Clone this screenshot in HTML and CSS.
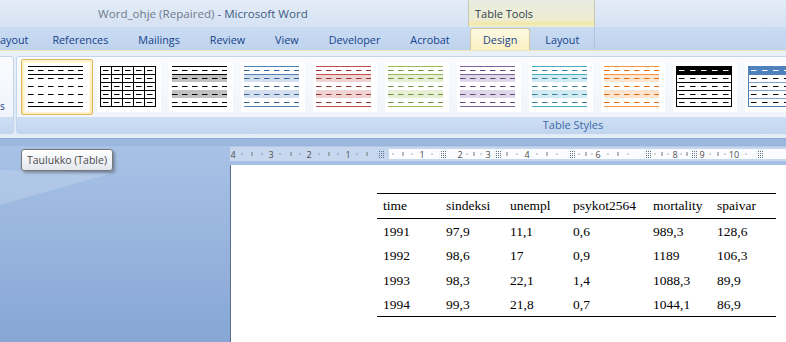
FILE: index.html
```html
<!DOCTYPE html>
<html>
<head>
    <meta charset="UTF-8">
    <title>Word_ohje (Repaired) - Microsoft Word</title>
    <link rel="stylesheet" href="styles.css">
</head>
<body>
    <!-- shared dash patterns for the table style previews -->
    <svg class="defs" width="0" height="0">
        <defs>
            <pattern id="dash6" width="10" height="8" patternUnits="userSpaceOnUse">
                <rect y="4" width="5.5" height="1" fill="#fff"/>
            </pattern>
            <pattern id="dash5" width="11" height="8" patternUnits="userSpaceOnUse">
                <rect x="3" y="4" width="5.5" height="1" fill="#fff"/>
            </pattern>
            <mask id="m6" maskUnits="userSpaceOnUse" x="0" y="0" width="56" height="43">
                <rect width="56" height="43" fill="url(#dash6)"/>
            </mask>
            <mask id="m5" maskUnits="userSpaceOnUse" x="0" y="0" width="56" height="43">
                <rect width="56" height="43" fill="url(#dash5)"/>
            </mask>
        </defs>
    </svg>

    <div class="titlebar">
        <div class="title">Word_ohje (Repaired) <span class="app">- Microsoft Word</span></div>
        <div class="ctx-head">Table Tools</div>
    </div>

    <div class="tabrow">
        <div class="tabs">
            <span class="tab cut">ayout</span>
            <span class="tab">References</span>
            <span class="tab">Mailings</span>
            <span class="tab">Review</span>
            <span class="tab">View</span>
            <span class="tab">Developer</span>
            <span class="tab">Acrobat</span>
        </div>
        <div class="ctx-tabs">
            <span class="tab active">Design</span>
            <span class="tab">Layout</span>
        </div>
    </div>

    <div class="ribbon">
        <div class="group prev">
            <div class="prev-body"><span class="prev-text">s</span></div>
            <div class="group-label"></div>
        </div>
        <div class="group styles">
            <div class="gallery">
                <!-- plain -->
                <div class="item selected"><div class="tile"><svg width="56" height="43">
                    <rect width="55" height="1"/><rect y="8" width="55" height="1"/><rect y="40" width="55" height="1"/>
                    <rect width="55" height="41" mask="url(#m6)"/>
                </svg></div></div>
                <!-- grid -->
                <div class="item"><div class="tile"><svg width="56" height="43">
                    <path d="M.5 .5H55.5V40.5H.5Z M11.5 .5V40.5 M22.5 .5V40.5 M33.5 .5V40.5 M44.5 .5V40.5 M.5 8.5H55.5 M.5 16.5H55.5 M.5 24.5H55.5 M.5 32.5H55.5" fill="none" stroke="#000"/>
                    <rect width="55" height="41" mask="url(#m5)"/>
                </svg></div></div>
                <!-- light shading, black and accents 1-6 -->
                <div class="item"><div class="tile"><svg width="56" height="43">
                    <rect y="9" width="55" height="7" fill="#c0c0c0"/><rect y="24" width="55" height="8" fill="#c0c0c0"/>
                    <rect width="55" height="1"/><rect y="8" width="55" height="1"/><rect y="40" width="55" height="1"/>
                    <rect width="55" height="41" mask="url(#m6)"/>
                </svg></div></div>
                <div class="item"><div class="tile"><svg width="56" height="43">
                    <rect y="9" width="55" height="7" fill="#d3dfee"/><rect y="24" width="55" height="8" fill="#d3dfee"/>
                    <g fill="#4f81bd"><rect width="55" height="1"/><rect y="8" width="55" height="1"/><rect y="40" width="55" height="1"/></g>
                    <rect width="55" height="41" fill="#365f91" mask="url(#m6)"/>
                </svg></div></div>
                <div class="item"><div class="tile"><svg width="56" height="43">
                    <rect y="9" width="55" height="7" fill="#efd3d2"/><rect y="24" width="55" height="8" fill="#efd3d2"/>
                    <g fill="#c0504d"><rect width="55" height="1"/><rect y="8" width="55" height="1"/><rect y="40" width="55" height="1"/></g>
                    <rect width="55" height="41" fill="#943634" mask="url(#m6)"/>
                </svg></div></div>
                <div class="item"><div class="tile"><svg width="56" height="43">
                    <rect y="9" width="55" height="7" fill="#e6eed5"/><rect y="24" width="55" height="8" fill="#e6eed5"/>
                    <g fill="#9bbb59"><rect width="55" height="1"/><rect y="8" width="55" height="1"/><rect y="40" width="55" height="1"/></g>
                    <rect width="55" height="41" fill="#76923c" mask="url(#m6)"/>
                </svg></div></div>
                <div class="item"><div class="tile"><svg width="56" height="43">
                    <rect y="9" width="55" height="7" fill="#dfd8e8"/><rect y="24" width="55" height="8" fill="#dfd8e8"/>
                    <g fill="#8064a2"><rect width="55" height="1"/><rect y="8" width="55" height="1"/><rect y="40" width="55" height="1"/></g>
                    <rect width="55" height="41" fill="#5f497a" mask="url(#m6)"/>
                </svg></div></div>
                <div class="item"><div class="tile"><svg width="56" height="43">
                    <rect y="9" width="55" height="7" fill="#d2eaf1"/><rect y="24" width="55" height="8" fill="#d2eaf1"/>
                    <g fill="#4bacc6"><rect width="55" height="1"/><rect y="8" width="55" height="1"/><rect y="40" width="55" height="1"/></g>
                    <rect width="55" height="41" fill="#31849b" mask="url(#m6)"/>
                </svg></div></div>
                <div class="item"><div class="tile"><svg width="56" height="43">
                    <rect y="9" width="55" height="7" fill="#fde4d0"/><rect y="24" width="55" height="8" fill="#fde4d0"/>
                    <g fill="#f79646"><rect width="55" height="1"/><rect y="8" width="55" height="1"/><rect y="40" width="55" height="1"/></g>
                    <rect width="55" height="41" fill="#e36c0a" mask="url(#m6)"/>
                </svg></div></div>
                <!-- header row styles -->
                <div class="item"><div class="tile"><svg width="56" height="43">
                    <rect width="56" height="9"/>
                    <path d="M.5 .5V40.5H55.5V.5 M.5 16.5H55.5 M.5 24.5H55.5 M.5 32.5H55.5" fill="none" stroke="#000" stroke-width="1.2"/>
                    <rect width="55" height="8" fill="#fff" mask="url(#m5)"/>
                    <rect y="9" width="55" height="32" mask="url(#m5)"/>
                </svg></div></div>
                <div class="item"><div class="tile"><svg width="56" height="43">
                    <rect width="56" height="9" fill="#4f81bd"/>
                    <path d="M.5 16.5H55.5 M.5 24.5H55.5 M.5 32.5H55.5" fill="none" stroke="#7ba0cd"/>
                    <path d="M.5 .5V40.5H55.5V.5" fill="none" stroke="#4f81bd"/>
                    <rect width="55" height="8" fill="#fff" mask="url(#m5)"/>
                    <rect y="9" width="55" height="32" mask="url(#m5)"/>
                </svg></div></div>
            </div>
            <div class="group-label">Table Styles</div>
        </div>
    </div>

    <div class="workspace">
        <div class="tooltip">Taulukko (Table)</div>
        <div class="ruler" id="ruler"></div>
        <div class="page">
            <table class="data">
                <tr class="head"><td>time</td><td>sindeksi</td><td>unempl</td><td>psykot2564</td><td>mortality</td><td>spaivar</td></tr>
                <tr><td>1991</td><td>97,9</td><td>11,1</td><td>0,6</td><td>989,3</td><td>128,6</td></tr>
                <tr><td>1992</td><td>98,6</td><td>17</td><td>0,9</td><td>1189</td><td>106,3</td></tr>
                <tr><td>1993</td><td>98,3</td><td>22,1</td><td>1,4</td><td>1088,3</td><td>89,9</td></tr>
                <tr><td>1994</td><td>99,3</td><td>21,8</td><td>0,7</td><td>1044,1</td><td>86,9</td></tr>
            </table>
        </div>
    </div>

    <script>
        // ruler marks: [x position in window, mark]; "." small tick, "|" half cm, "#" column marker
        var marks = [
            [233,'4'],[242,'.'],[252,'|'],[262,'.'],[271,'3'],[280,'.'],[291,'|'],[300,'.'],
            [309,'2'],[319,'.'],[329,'|'],[338,'.'],[348,'1'],[357,'.'],[367,'|'],[381,'#'],
            [393,'.'],[403,'|'],[412,'.'],[422,'1'],[432,'.'],[443,'#'],[460,'2'],[467,'.'],
            [474,'|'],[481,'.'],[488,'3'],[498,'#'],[507,'|'],[517,'.'],[527,'4'],[537,'.'],
            [547,'|'],[557,'.'],[572,'#'],[579,'.'],[586,'|'],[592,'.'],[598,'6'],[608,'.'],
            [618,'|'],[628,'.'],[648,'#'],[655,'.'],[662,'|'],[668,'.'],[675,'8'],[681,'.'],
            [687,'|'],[694,'#'],[702,'9'],[710,'.'],[718,'|'],[725,'.'],[734,'10'],[746,'.'],
            [760,'#']
        ];
        var ruler = document.getElementById('ruler');
        marks.forEach(function (m) {
            var s = document.createElement('span');
            if (m[1] == '.') s.className = 'dot';
            else if (m[1] == '|') s.className = 'bar';
            else if (m[1] == '#') s.className = 'marker';
            else { s.className = 'num'; s.textContent = m[1]; }
            s.style.left = (m[0] - 230) + 'px';
            ruler.appendChild(s);
        });
    </script>
</body>
</html>
```

FILE: styles.css
```css
* {
    box-sizing: border-box;
}

body {
    margin: 0;
    width: 786px;
    height: 342px;
    overflow: hidden;
    font-family: "Open Sans", "DejaVu Sans", sans-serif;
    background-color: #9cb7de;
}

.defs {
    position: absolute;
}

/* title bar */
.titlebar {
    display: flex;
    height: 27px;
    background: linear-gradient(#e4edf8, #d5e2f3);
}

.title {
    width: 468px;
    padding-left: 98px;
    line-height: 27px;
    font-size: 11.6px;
    color: #6d7a8b;
    white-space: nowrap;
}

.title .app {
    color: #3f5c80;
}

.ctx-head {
    width: 127px;
    padding-left: 6px;
    line-height: 27px;
    font-size: 11px;
    color: #2f3d50;
    border-left: 1px solid #cac8b2;
    border-right: 1px solid #cac8b2;
    background: linear-gradient(#e8ece2, #eeedd0 75%, #f1e7a4 88%, #eef0d6);
}

/* tabs */
.tabrow {
    display: flex;
    height: 23px;
    font-size: 10.8px;
    color: #15428b;
    background: linear-gradient(#cadcf3, #bfd3ee);
}

.tabs {
    width: 468px;
    display: flex;
    align-items: flex-end;
}

.tab {
    padding: 0 15px;
    line-height: 21px;
    white-space: nowrap;
}

.tab.cut {
    padding: 0 9px 0 0;
}

.ctx-tabs {
    width: 127px;
    display: flex;
    align-items: flex-end;
    border-right: 1px solid #b4c4d8;
}

.tab.active {
    margin-left: 2px;
    padding: 0 12px;
    height: 22px;
    background: linear-gradient(#fdf9e3, #fbf0c2);
    border: 1px solid #d2c9a2;
    border-bottom: none;
    border-radius: 3px 3px 0 0;
}

/* ribbon */
.ribbon {
    display: flex;
    height: 89px;
    padding: 5px 0 4px;
    border-top: 1px solid #efe4b4;
    border-bottom: 1px solid #8eadd9;
    background: linear-gradient(#e9f0f9, #dde8f6 85%, #e4edf8);
}

.group {
    flex-shrink: 0;
    display: flex;
    flex-direction: column;
    border: 1px solid #c3d5eb;
    border-radius: 3px;
    background: linear-gradient(#f9fbfe, #eef3fa);
}

.group.prev {
    width: 34px;
    margin-left: -20px;
    margin-right: 2px;
}

.prev-body {
    flex: 1;
    position: relative;
}

.prev-text {
    position: absolute;
    left: 19px;
    top: 42px;
    font-size: 10px;
    color: #15428b;
}

.group.styles {
    width: 1114px;
}

.gallery {
    height: 60px;
    display: flex;
    padding: 2px 0 0 4px;
}

.item {
    width: 72px;
    height: 56px;
    padding: 4px 4px 3px;
    flex-shrink: 0;
}

.item.selected {
    padding: 3px 3px 2px;
    border: 1px solid #ddb65c;
    border-radius: 2px;
    background: linear-gradient(#fff4cc, #fde7a2);
}

.tile {
    height: 49px;
    padding: 3px;
    background-color: #FFFFFF;
}

.item.selected .tile {
    box-shadow: 0 0 2px 1px #fffbe9;
}

.tile svg {
    display: block;
    shape-rendering: crispEdges;
}

.group-label {
    height: 16px;
    line-height: 15px;
    text-align: center;
    font-size: 11px;
    color: #3e69a6;
    background: linear-gradient(#cfdff3, #c2d6f0);
}

/* document area */
.workspace {
    position: relative;
    height: 203px;
    background: linear-gradient(#a8c2e6, #86a5d4);
}

.workspace::before {
    content: "";
    position: absolute;
    left: 0;
    top: 0;
    width: 120px;
    height: 70px;
    background-color: rgba(255, 255, 255, 0.16);
    clip-path: polygon(0 24px, 112px 27px, 0 59px);
}

.tooltip {
    position: absolute;
    left: 21px;
    top: 3px;
    width: 92px;
    height: 22px;
    padding-left: 5px;
    line-height: 20px;
    font-size: 10.5px;
    color: #4a4a4a;
    white-space: nowrap;
    border: 1px solid #777;
    border-radius: 3px;
    background: linear-gradient(#ffffff, #e3e8ef);
    box-shadow: 2px 2px 3px rgba(0, 0, 0, 0.3);
    z-index: 2;
}

.ruler {
    position: relative;
    margin: 7px 0 0 230px;
    height: 15px;
    border-top: 1px solid #b3c8e6;
    background: linear-gradient(90deg, transparent 159px, #fbfcfe 159px) 0 2px / 100% 10px no-repeat, #c6d7ee;
}

.ruler span {
    position: absolute;
    top: 50%;
    transform: translate(-50%, -50%);
}

.num {
    font-size: 9px;
    line-height: 9px;
    color: #4f4f4f;
}

.dot {
    width: 1px;
    height: 1px;
    background-color: #666;
}

.bar {
    width: 1px;
    height: 4px;
    background-color: #777;
}

.marker {
    width: 7px;
    height: 9px;
    background: repeating-linear-gradient(90deg, #62738e 0 1px, transparent 1px 2px);
    -webkit-mask-image: repeating-linear-gradient(#000 0 1px, transparent 1px 2px);
}

.page {
    margin: 4px 0 0 230px;
    height: 177px;
    padding: 28px 0 0 146px;
    border-left: 1px solid #5f6f86;
    background-color: #FFFFFF;
}

.data {
    border-collapse: collapse;
    width: 399px;
    font-family: "Liberation Serif", "Times New Roman", serif;
    font-size: 13.5px;
    color: #000;
    border-top: 1px solid #000;
    border-bottom: 1px solid #000;
}

.data td {
    height: 24.5px;
    padding: 2px 0 0 6px;
    vertical-align: middle;
}

.data tr.head td {
    height: 25px;
    padding-top: 0;
    border-bottom: 1px solid #000;
}

.data td:nth-child(1) { width: 63px; }
.data td:nth-child(2) { width: 64px; }
.data td:nth-child(3) { width: 63px; }
.data td:nth-child(4) { width: 80px; }
.data td:nth-child(5) { width: 64px; }
.data td:nth-child(6) { width: 65px; }
```
